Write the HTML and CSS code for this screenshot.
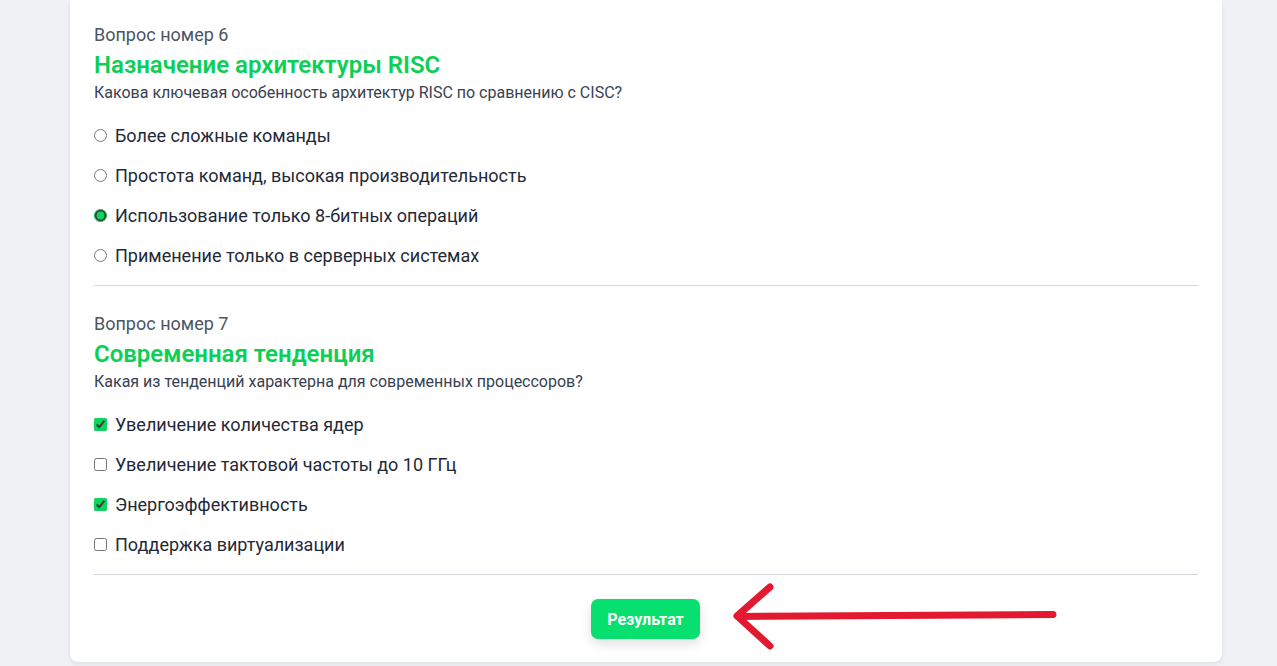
FILE: index.html
```html
<!DOCTYPE html>
<html lang="ru">
<head>
<meta charset="utf-8">
<title>Тест</title>
<link rel="stylesheet" href="styles.css">
</head>
<body>
<div class="page">
  <div class="card">
    <section class="question first">
      <div class="q-num">Вопрос номер 6</div>
      <h2 class="q-title">Назначение архитектуры RISC</h2>
      <p class="q-text">Какова ключевая особенность архитектур RISC по сравнению с CISC?</p>
      <div class="options">
        <label class="option"><input type="radio" name="q6"> Более сложные команды</label>
        <label class="option"><input type="radio" name="q6"> Простота команд, высокая производительность</label>
        <label class="option"><input type="radio" name="q6" checked> Использование только 8-битных операций</label>
        <label class="option"><input type="radio" name="q6"> Применение только в серверных системах</label>
      </div>
    </section>
    <section class="question">
      <div class="q-num">Вопрос номер 7</div>
      <h2 class="q-title">Современная тенденция</h2>
      <p class="q-text">Какая из тенденций характерна для современных процессоров?</p>
      <div class="options">
        <label class="option"><input type="checkbox" checked> Увеличение количества ядер</label>
        <label class="option"><input type="checkbox"> Увеличение тактовой частоты до 10 ГГц</label>
        <label class="option"><input type="checkbox" checked> Энергоэффективность</label>
        <label class="option"><input type="checkbox"> Поддержка виртуализации</label>
      </div>
    </section>
    <div class="footer">
      <button class="result-btn">Результат</button>
      <svg class="arrow" width="330" height="72" viewBox="0 0 330 72">
        <g fill="none" stroke="#e3192f" stroke-width="7" stroke-linecap="round" stroke-linejoin="round">
          <path d="M8 36.5 L323 34.5"/>
          <path d="M40 7 L7 36 L40 66"/>
        </g>
      </svg>
    </div>
  </div>
</div>
</body>
</html>
```

FILE: styles.css
```css
* { box-sizing: border-box; }
html, body { margin: 0; padding: 0; }
body {
  background: #f0f1f4;
  font-family: Roboto, "Liberation Sans", Arial, sans-serif;
  color: #1f2937;
  height: 666px;
  overflow: hidden;
}
.page {
  padding-left: 70px;
}
.card {
  width: 1152px;
  background: #ffffff;
  border-radius: 0 0 8px 8px;
  box-shadow: 0 2px 4px rgba(0,0,0,0.08);
  padding: 0 24px 23px;
}
.question {
  padding: 26px 0 10px;
  border-bottom: 1px solid #d3d6db;
}
.question.first { padding-top: 23px; }
.q-num {
  font-size: 18px;
  line-height: 24px;
  color: #4b5563;
}
.q-title {
  margin: 2px 0 2px;
  font-size: 24px;
  line-height: 32px;
  font-weight: 600;
  color: #0ccf55;
}
.q-text {
  margin: 0;
  font-size: 16px;
  line-height: 20px;
  color: #374151;
}
.options {
  margin-top: 12px;
  display: flex;
  flex-direction: column;
}
.option {
  height: 40px;
  display: flex;
  align-items: center;
  gap: 8px;
  font-size: 18px;
  color: #1f2937;
}
.option input {
  margin: 0;
  width: 13px;
  height: 13px;
  accent-color: #0cd65f;
}
.footer {
  position: relative;
  padding-top: 24px;
  display: flex;
  justify-content: center;
}
.result-btn {
  height: 40px;
  width: 109px;
  margin-right: 1px;
  border: none;
  border-radius: 7px;
  background: #07e06f;
  color: #ffffff;
  font-family: Roboto, "Liberation Sans", Arial, sans-serif;
  font-size: 16px;
  font-weight: 700;
  box-shadow: 0 5px 12px rgba(0,0,0,0.12);
  cursor: pointer;
}
.arrow {
  position: absolute;
  left: 636px;
  top: 5px;
}
```
